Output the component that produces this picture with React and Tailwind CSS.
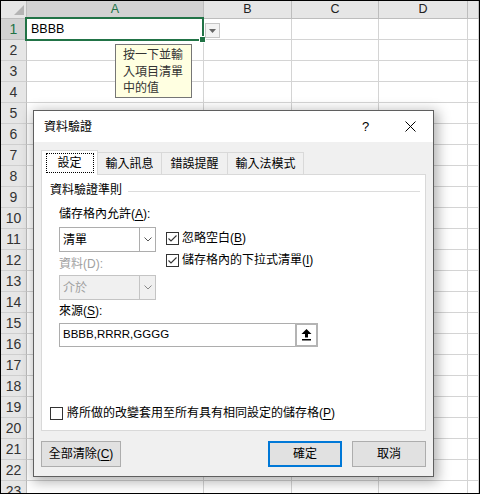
import React from 'react';

const COLS = [
  { key: 'A', w: 'w-[177px]' },
  { key: 'B', w: 'w-[88px]' },
  { key: 'C', w: 'w-[87px]' },
  { key: 'D', w: 'w-[89px]' },
  { key: '', w: 'flex-1' },
];

const ROWS = Array.from({ length: 23 }, (_, i) => i + 1);

// 勾選框
const Check = ({ checked }) => (
  <svg width="13" height="13" viewBox="0 0 13 13" className="shrink-0">
    <rect x="0.5" y="0.5" width="12" height="12" fill="#fff" stroke="#333" />
    {checked && <path d="M2.5 6.5l2.5 2.5 5.5-5.5" fill="none" stroke="#333" strokeWidth="1.1" />}
  </svg>
);

const Chevron = ({ color }) => (
  <svg width="8" height="5" viewBox="0 0 8 5">
    <path d="M0.5 0.5L4 4l3.5-3.5" fill="none" stroke={color} strokeWidth="1" />
  </svg>
);

const Combo = ({ value, disabled, className = '' }) => (
  <div
    className={`w-[97px] h-[25px] border flex ${className} ${
      disabled ? 'bg-[#f0f0f0] border-[#c4c4c4] text-[#a0a0a0]' : 'bg-white border-[#adadad] text-black'
    }`}
  >
    <div className="flex-1 flex items-center pl-[3px]">{value}</div>
    <div className={`w-[16px] border-l flex items-center justify-center ${disabled ? 'border-[#c4c4c4]' : 'border-[#adadad]'}`}>
      <Chevron color={disabled ? '#888' : '#555'} />
    </div>
  </div>
);

const Mn = ({ children }) => <span className="underline underline-offset-2">{children}</span>;

const Sheet = () => (
  <div className="flex flex-col font-['Liberation_Sans',sans-serif] text-[#333]">
    <div className="flex h-[18px] shrink-0">
      <div className="w-[26px] h-full bg-[#e6e6e6] border-r border-b border-[#bdbdbd] relative">
        <svg width="26" height="18" className="absolute left-0 top-0">
          <polygon points="23,4 23,14 13,14" fill="#b4b4b4" />
        </svg>
      </div>
      {COLS.map((c) => (
        <div
          key={c.key || 'E'}
          className={`${c.w} h-full flex items-center justify-center text-[12.5px] border-r ${
            c.key === 'A'
              ? 'bg-[#d2d2d2] text-[#217346] border-[#bdbdbd] border-b-2 border-b-[#217346]'
              : 'bg-[#e6e6e6] text-[#222] border-[#bdbdbd] border-b'
          }`}
        >
          {c.key}
        </div>
      ))}
    </div>
    {ROWS.map((r) => (
      <div key={r} className="flex h-[21px] shrink-0">
        <div
          className={`w-[26px] h-full flex items-center justify-center text-[14px] border-r border-b ${
            r === 1 ? 'bg-[#d2d2d2] text-[#217346] border-[#bdbdbd]' : 'bg-[#e6e6e6] text-[#333] border-[#cfcfcf] border-r-[#bdbdbd]'
          }`}
        >
          {r}
        </div>
        {COLS.map((c) => (
          <div
            key={c.key || 'E'}
            className={`${c.w} h-full bg-white border-r border-b border-[#d4d4d4] flex items-center pl-[4px] text-[12.5px] text-black`}
          >
            {r === 1 && c.key === 'A' ? 'BBBB' : ''}
          </div>
        ))}
      </div>
    ))}
  </div>
);

const Dialog = () => (
  <div className="absolute left-[32px] top-[109px] w-[401px] h-[367px] border border-[#5f5f5f] bg-[#f0f0f0] shadow-[2px_3px_12px_2px_rgba(0,0,0,0.3)] flex flex-col font-['Liberation_Sans','Noto_Sans_CJK_TC',sans-serif] text-[12px] text-black">
    <div className="h-[31px] bg-white flex items-center shrink-0">
      <span className="pl-[10px] flex-1">資料驗證</span>
      <div className="w-[45px] flex justify-center text-[13px]">?</div>
      <div className="w-[45px] flex justify-center">
        <svg width="11" height="11" viewBox="0 0 11 11">
          <path d="M0.5 0.5l10 10M10.5 0.5l-10 10" stroke="#000" strokeWidth="1" />
        </svg>
      </div>
    </div>

    <div className="flex-1 flex flex-col px-[7px] pt-[8px] pb-[9px]">
      {/* 頁籤 */}
      <div className="flex items-end h-[25px] -mb-px relative z-10 shrink-0">
        <div className="w-[57px] h-[25px] bg-white border border-b-0 border-[#d9d9d9] flex items-center justify-center">
          <div className="w-[48px] h-[20px] border border-dotted border-black flex items-center justify-center">設定</div>
        </div>
        <div className="w-[64px] h-[23px] border border-l-0 border-[#d9d9d9] flex items-center justify-center">輸入訊息</div>
        <div className="w-[66px] h-[23px] border border-l-0 border-[#d9d9d9] flex items-center justify-center">錯誤提醒</div>
        <div className="w-[76px] h-[23px] border border-l-0 border-[#d9d9d9] flex items-center justify-center">輸入法模式</div>
      </div>

      {/* 內容 */}
      <div className="h-[257px] shrink-0 border border-[#d9d9d9] bg-white flex flex-col pt-[7px] pb-[9px]">
        <div className="flex items-center h-[16px] pl-[8px] pr-[5px]">
          <span>資料驗證準則</span>
          <div className="flex-1 ml-[6px] mt-[3px] border-t border-[#dcdcdc]" />
        </div>

        <div className="pl-[17px] mt-[8px]">
          <div className="h-[16px] leading-[16px]">
            儲存格內允許(<Mn>A</Mn>):
          </div>
          <div className="flex mt-[5px]">
            <div className="flex flex-col w-[97px]">
              <Combo value="清單" />
              <div className="mt-[4px] h-[16px] leading-[16px] text-[#a0a0a0]">資料(D):</div>
              <Combo value="介於" disabled className="mt-[3px]" />
            </div>
            <div className="ml-[10px] pt-[3px] flex flex-col gap-[6px]">
              <div className="flex items-center h-[16px] gap-[3px]">
                <Check checked />
                <span>
                  忽略空白(<Mn>B</Mn>)
                </span>
              </div>
              <div className="flex items-center h-[16px] gap-[3px]">
                <Check checked />
                <span>
                  儲存格內的下拉式清單(<Mn>I</Mn>)
                </span>
              </div>
            </div>
          </div>
          <div className="mt-[3px] h-[16px] leading-[16px]">
            來源(<Mn>S</Mn>):
          </div>
          <div className="mt-[4px] w-[259px] h-[24px] flex">
            <div className="flex-1 border border-r-0 border-[#adadad] flex items-center pl-[3px] text-[11.5px] font-['Liberation_Sans',sans-serif]">
              BBBB,RRRR,GGGG
            </div>
            <div className="w-[23px] h-full border-2 border-[#b4b4b4] bg-white flex items-center justify-center">
              <svg width="11" height="12" viewBox="0 0 11 12">
                <polygon points="5.5,0 10.5,5 7,5 7,8.5 4,8.5 4,5 0.5,5" fill="#000" />
                <rect x="1" y="10" width="9" height="1.5" fill="#000" />
              </svg>
            </div>
          </div>
        </div>

        <div className="mt-auto pl-[8px] flex items-center h-[16px] gap-[4px]">
          <Check />
          <span>
            將所做的改變套用至所有具有相同設定的儲存格(<Mn>P</Mn>)
          </span>
        </div>
      </div>

      {/* 按鈕 */}
      <div className="flex mt-[10px] shrink-0">
        <button className="w-[80px] h-[26px] bg-[#e1e1e1] border border-[#adadad] flex items-center justify-center">
          全部清除(<Mn>C</Mn>)
        </button>
        <div className="flex-1" />
        <button className="w-[74px] h-[26px] bg-[#e1e1e1] border-2 border-[#0078d7] flex items-center justify-center">
          確定
        </button>
        <button className="w-[74px] h-[26px] ml-[10px] bg-[#e1e1e1] border border-[#adadad] flex items-center justify-center">
          取消
        </button>
      </div>
    </div>
  </div>
);

export default function App() {
  return (
    <div className="w-[480px] h-[494px] border border-black overflow-hidden bg-white">
      <div className="relative w-[478px] h-[492px] overflow-hidden">
        <Sheet />

        {/* A1 選取框 */}
        <div className="absolute left-[24px] top-[16px] w-[179px] h-[24px] border-2 border-[#217346]">
          <div className="absolute right-[-4px] bottom-[-4px] w-[7px] h-[7px] bg-[#217346] border border-white" />
        </div>

        {/* 下拉按鈕 */}
        <div className="absolute left-[204px] top-[22px] w-[15px] h-[15px] bg-[#f3f3f3] border border-[#c6c6c6] flex items-center justify-center">
          <svg width="7" height="4" viewBox="0 0 7 4">
            <polygon points="0,0 7,0 3.5,4" fill="#666" />
          </svg>
        </div>

        {/* 提示 */}
        <div className="absolute left-[114px] top-[43px] w-[77px] h-[54px] border border-[#767676] bg-[#ffffe1] px-[7px] pt-[1px] text-[12px] leading-[16.5px] text-[#333] font-['Noto_Sans_CJK_TC',sans-serif] whitespace-nowrap">
          <div>按一下並輸</div>
          <div>入項目清單</div>
          <div>中的值</div>
        </div>

        <Dialog />
      </div>
    </div>
  );
}
